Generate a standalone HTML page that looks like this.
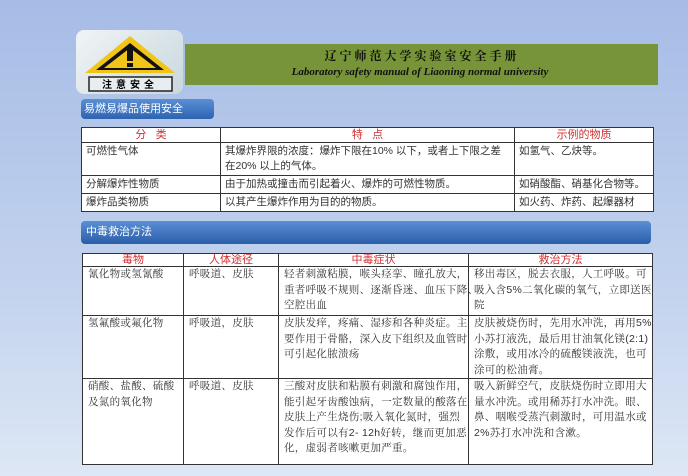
<!DOCTYPE html><html><head><meta charset="utf-8"><style>
body{margin:0;width:688px;height:476px;overflow:hidden;background:linear-gradient(#a6bce6,#c3d3ee 60%,#dde7f5);font-family:"Liberation Sans","Noto Sans CJK SC",sans-serif;position:relative}
.a{position:absolute}
table{border-collapse:collapse;background:#fff;position:absolute;table-layout:fixed}
td{border:1px solid #333;font-size:10.5px;color:#333;vertical-align:top;padding:1px 4px;line-height:15px;white-space:nowrap;overflow:hidden}
th{border:1px solid #333;font-size:11px;color:#d03030;font-weight:normal;padding:0;line-height:14px}
.t2 th{line-height:12px}
.t2 td{line-height:15.5px;padding:0 4px 0 5px;font-size:10.5px;letter-spacing:0.3px;font-family:"Liberation Sans","Noto Serif CJK SC",serif;overflow:visible}
</style></head><body>
<div class="a" style="left:76px;top:30px;width:107px;height:64px;border-radius:8px;background:linear-gradient(135deg,#f0f4f6,#c9d8de)"></div>
<svg class="a" style="left:80px;top:33px" width="100" height="60"><polygon points="50,3 95,40 5,40" fill="#f0c418"/><polygon points="50,10 84,37 16,37" fill="#111"/><polygon points="50,15 76,35 24,35" fill="#f0c418"/><rect x="47" y="14" width="6" height="14" fill="#111"/><rect x="47" y="30" width="6" height="4" fill="#111"/><rect x="9" y="44" width="83" height="14" fill="#e8eef0" stroke="#222" stroke-width="1.5"/><text x="50" y="55" font-size="10" text-anchor="middle" font-weight="bold" letter-spacing="4" font-family="Noto Sans CJK SC">注意安全</text></svg>
<div class="a" style="left:185px;top:44px;width:473px;height:41px;background:#779438"></div>
<div class="a" style="left:272px;top:47px;width:300px;text-align:center;font-size:12px;font-weight:bold;letter-spacing:3px;color:#111;font-family:'Noto Serif CJK SC',serif">辽宁师范大学实验室安全手册</div>
<div class="a" style="left:270px;top:66px;width:300px;text-align:center;font-size:11px;font-style:italic;font-weight:bold;color:#111;font-family:'Liberation Serif',serif">Laboratory safety manual of Liaoning normal university</div>
<div class="a" style="left:81px;top:99px;width:133px;height:20px;border-radius:4px;background:linear-gradient(#5a8fd6,#2e63b2);color:#fff;font-size:11px;line-height:20px;padding-left:3px;box-sizing:border-box">易燃易爆品使用安全</div>
<table style="left:81px;top:127px;width:572px"><colgroup><col style="width:139px"><col style="width:294px"><col style="width:139px"></colgroup>
<tr><th>分&nbsp;&nbsp;&nbsp;类</th><th>特&nbsp;&nbsp;&nbsp;点</th><th>示例的物质</th></tr>
<tr><td style="height:30px">可燃性气体</td><td>其爆炸界限的浓度：爆炸下限在10% 以下，或者上下限之差<br>在20% 以上的气体。</td><td>如氢气、乙炔等。</td></tr>
<tr><td>分解爆炸性物质</td><td>由于加热或撞击而引起着火、爆炸的可燃性物质。</td><td>如硝酸酯、硝基化合物等。</td></tr>
<tr><td>爆炸品类物质</td><td>以其产生爆炸作用为目的的物质。</td><td>如火药、炸药、起爆器材</td></tr></table>
<div class="a" style="left:81px;top:221px;width:570px;height:23px;border-radius:4px;background:linear-gradient(#5a8fd6,#2a5ea8);color:#fff;font-size:11px;line-height:22px;padding-left:5px;box-sizing:border-box">中毒救治方法</div>
<table class="t2" style="left:82px;top:253px;width:570px"><colgroup><col style="width:101px"><col style="width:95px"><col style="width:190px"><col style="width:184px"></colgroup>
<tr><th>毒物</th><th>人体途径</th><th>中毒症状</th><th>救治方法</th></tr>
<tr><td style="height:48px">氰化物或氢氰酸</td><td>呼吸道、皮肤</td><td>轻者刺激粘膜，喉头痉挛、瞳孔放大，<br>重者呼吸不规则、逐渐昏迷、血压下降、<br>空腔出血</td><td>移出毒区，脱去衣服，人工呼吸。可<br>吸入含5%二氧化碳的氧气，立即送医<br>院</td></tr>
<tr><td style="height:61px">氢氟酸或氟化物</td><td>呼吸道，皮肤</td><td>皮肤发痒，疼痛、湿疹和各种炎症。主<br>要作用于骨骼，深入皮下组织及血管时<br>可引起化脓溃疡</td><td>皮肤被烧伤时，先用水冲洗，再用5%<br>小苏打液洗，最后用甘油氧化镁(2:1)<br>涂敷，或用冰冷的硫酸镁液洗，也可<br>涂可的松油膏。</td></tr>
<tr><td style="height:85px">硝酸、盐酸、硫酸<br>及氮的氧化物</td><td>呼吸道、皮肤</td><td>三酸对皮肤和粘膜有刺激和腐蚀作用，<br>能引起牙齿酸蚀病，一定数量的酸落在<br>皮肤上产生烧伤;吸入氧化氮时，强烈<br>发作后可以有2- 12h好转，继而更加恶<br>化，虚弱者咳嗽更加严重。</td><td>吸入新鲜空气，皮肤烧伤时立即用大<br>量水冲洗。或用稀苏打水冲洗。眼、<br>鼻、咽喉受蒸汽刺激时，可用温水或<br>2%苏打水冲洗和含漱。</td></tr></table>
</body></html>
